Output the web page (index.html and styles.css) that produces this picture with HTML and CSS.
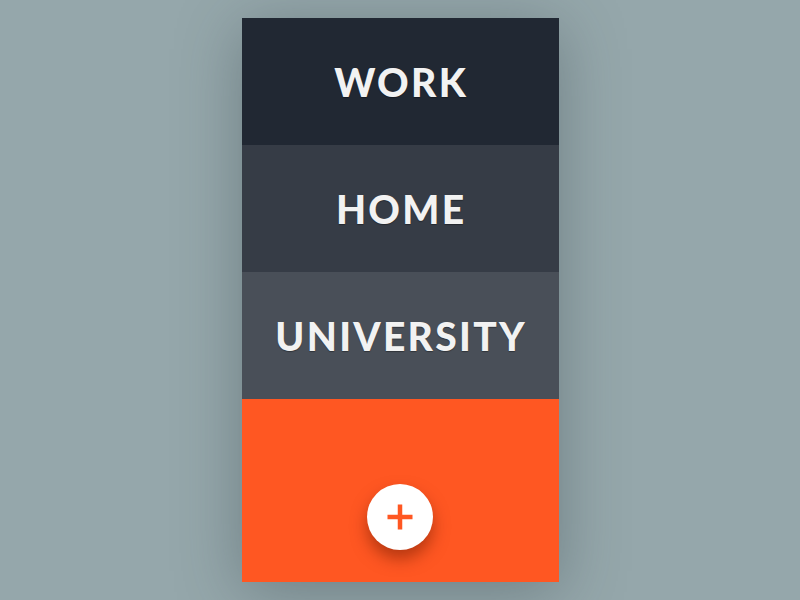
FILE: index.html
```html
<!DOCTYPE html>
<html>
<head>
<meta charset="utf-8">
<link rel="stylesheet" href="styles.css">
</head>
<body>
<div class="card">
  <div class="row row-work"><span class="label">WORK</span></div>
  <div class="row row-home"><span class="label">HOME</span></div>
  <div class="row row-uni"><span class="label">UNIVERSITY</span></div>
  <div class="add-area">
    <button class="fab" aria-label="Add">
      <svg width="26" height="26" viewBox="0 0 26 26"><rect x="0.5" y="10.75" width="25" height="4.5" fill="#ff5722"/><rect x="10.75" y="0.5" width="4.5" height="25" fill="#ff5722"/></svg>
    </button>
  </div>
</div>
</body>
</html>
```

FILE: styles.css
```css
html, body {
  margin: 0;
  height: 100%;
}
body {
  background: #95a7ab;
  display: flex;
  align-items: center;
  justify-content: center;
  font-family: "Lato", "Liberation Sans", sans-serif;
}
.card {
  width: 317px;
  height: 564px;
  display: flex;
  flex-direction: column;
  box-shadow: 0 10px 60px rgba(40, 55, 60, 0.35);
}
.row {
  height: 127px;
  display: flex;
  align-items: center;
  justify-content: center;
}
.row-work { background: #212833; }
.row-home { background: #363c46; }
.row-uni { background: #494f58; }
.label {
  color: #f2f2f2;
  font-weight: 900;
  font-size: 39px;
  letter-spacing: 2.3px;
  padding-left: 2.3px;
  text-shadow: 0 1px 1px rgba(0,0,0,0.35);
}
.add-area {
  flex: 1;
  background: #ff5722;
  display: flex;
  flex-direction: column;
  align-items: center;
  justify-content: flex-end;
  padding-bottom: 32px;
}
.fab {
  width: 66px;
  height: 66px;
  border-radius: 50%;
  border: none;
  padding: 0;
  background: #ffffff;
  display: flex;
  align-items: center;
  justify-content: center;
  box-shadow: 0 9px 16px rgba(110, 25, 0, 0.5);
}
.fab svg { display: block; }
```
